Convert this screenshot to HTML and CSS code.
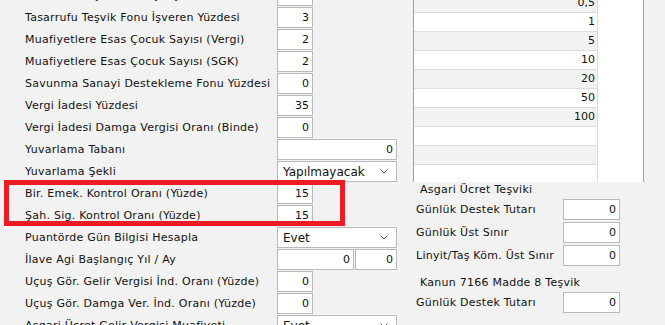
FILE: index.html
```html
<!DOCTYPE html>
<html lang="tr">
<head>
<meta charset="utf-8">
<link rel="stylesheet" href="styles.css">
</head>
<body>
<div class="page">
  <div class="left">
    <div class="row"><span class="lbl">Tasarrufu Teşvik Fonu Çalışan Yüzdesi</span><span class="inp">3</span></div>
    <div class="row"><span class="lbl">Tasarrufu Teşvik Fonu İşveren Yüzdesi</span><span class="inp">3</span></div>
    <div class="row"><span class="lbl">Muafiyetlere Esas Çocuk Sayısı (Vergi)</span><span class="inp">2</span></div>
    <div class="row"><span class="lbl">Muafiyetlere Esas Çocuk Sayısı (SGK)</span><span class="inp">2</span></div>
    <div class="row"><span class="lbl">Savunma Sanayi Destekleme Fonu Yüzdesi</span><span class="inp">0</span></div>
    <div class="row"><span class="lbl">Vergi İadesi Yüzdesi</span><span class="inp">35</span></div>
    <div class="row"><span class="lbl">Vergi İadesi Damga Vergisi Oranı (Binde)</span><span class="inp">0</span></div>
    <div class="row"><span class="lbl">Yuvarlama Tabanı</span><span class="inp wide">0</span></div>
    <div class="row"><span class="lbl">Yuvarlama Şekli</span><span class="sel"><span>Yapılmayacak</span><svg class="chev" width="8" height="5" viewBox="0 0 8 5"><polyline points="0.5,0.5 4,4 7.5,0.5" fill="none" stroke="#555" stroke-width="1"/></svg></span></div>
    <div class="row"><span class="lbl">Bir. Emek. Kontrol Oranı (Yüzde)</span><span class="inp">15</span></div>
    <div class="row"><span class="lbl">Şah. Sig. Kontrol Oranı (Yüzde)</span><span class="inp">15</span></div>
    <div class="row"><span class="lbl">Puantörde Gün Bilgisi Hesapla</span><span class="sel"><span>Evet</span><svg class="chev" width="8" height="5" viewBox="0 0 8 5"><polyline points="0.5,0.5 4,4 7.5,0.5" fill="none" stroke="#555" stroke-width="1"/></svg></span></div>
    <div class="row"><span class="lbl">İlave Agi Başlangıç Yıl / Ay</span><span class="pair"><span class="inp yil">0</span><span class="inp ay">0</span></span></div>
    <div class="row"><span class="lbl">Uçuş Gör. Gelir Vergisi İnd. Oranı (Yüzde)</span><span class="inp">0</span></div>
    <div class="row"><span class="lbl">Uçuş Gör. Damga Ver. İnd. Oranı (Yüzde)</span><span class="inp">0</span></div>
    <div class="row"><span class="lbl">Asgari Ücret Gelir Vergisi Muafiyeti</span><span class="sel"><span>Evet</span><svg class="chev" width="8" height="5" viewBox="0 0 8 5"><polyline points="0.5,0.5 4,4 7.5,0.5" fill="none" stroke="#555" stroke-width="1"/></svg></span></div>
  </div>
  <div class="right">
    <div class="grid">
      <div class="grid-rows">
        <div class="grow odd"><span class="cell">0,5</span></div>
        <div class="grow"><span class="cell">1</span></div>
        <div class="grow odd"><span class="cell">5</span></div>
        <div class="grow"><span class="cell">10</span></div>
        <div class="grow odd"><span class="cell">20</span></div>
        <div class="grow"><span class="cell">50</span></div>
        <div class="grow odd"><span class="cell">100</span></div>
        <div class="grow"><span class="cell"></span></div>
        <div class="grow odd"><span class="cell"></span></div>
        <div class="grow"><span class="cell"></span></div>
      </div>
    </div>
    <div class="section">
      <div class="title">Asgari Ücret Teşviki</div>
      <div class="srow"><span class="slbl">Günlük Destek Tutarı</span><span class="inp sinp">0</span></div>
      <div class="srow"><span class="slbl">Günlük Üst Sınır</span><span class="inp sinp">0</span></div>
      <div class="srow"><span class="slbl">Linyit/Taş Köm. Üst Sınır</span><span class="inp sinp">0</span></div>
      <div class="title t2">Kanun 7166 Madde 8 Teşvik</div>
      <div class="srow"><span class="slbl">Günlük Destek Tutarı</span><span class="inp sinp">0</span></div>
    </div>
  </div>
</div>
<div class="mark"></div>
</body>
</html>
```
FILE: styles.css
```css
html, body {
  margin: 0;
  padding: 0;
}
body {
  width: 665px;
  height: 325px;
  overflow: hidden;
  background: #f2f2f2;
  font-family: "DejaVu Sans", Verdana, sans-serif;
  font-size: 11px;
  letter-spacing: 0.25px;
  color: #111;
  position: relative;
}
.page {
  display: flex;
  align-items: flex-start;
}
.left {
  width: 400px;
  margin-top: -15px;
}
.row {
  display: flex;
  align-items: center;
  height: 21px;
  margin-bottom: 1px;
}
.lbl {
  width: 252px;
  padding-left: 25px;
  white-space: nowrap;
  overflow: hidden;
}
.inp {
  box-sizing: border-box;
  width: 36px;
  height: 21px;
  border: 1px solid #b9b9b9;
  background: #fff;
  text-align: right;
  padding-right: 3px;
  line-height: 19px;
  white-space: nowrap;
  letter-spacing: 0;
}
.inp.wide { width: 120px; }
.pair {
  display: flex;
  gap: 1px;
}
.inp.yil { width: 77px; }
.inp.ay { width: 42px; }
.sel {
  box-sizing: border-box;
  width: 120px;
  height: 21px;
  border: 1px solid #b9b9b9;
  background: #fff;
  display: flex;
  align-items: center;
  justify-content: space-between;
  padding-left: 5px;
  padding-right: 8px;
  font-size: 12px;
  letter-spacing: 0;
}
.chev { display: block; }
.right {
  margin-left: 13px;
  width: 231px;
}
.grid {
  box-sizing: border-box;
  width: 231px;
  height: 182px;
  overflow: hidden;
  background: #fff;
  border-left: 1px solid #a0a0a0;
  border-right: 1px solid #a0a0a0;
}
.grid-rows { margin-top: -6px; }
.grow {
  display: flex;
}
.cell {
  box-sizing: border-box;
  width: 184px;
  height: 19px;
  border-bottom: 1px solid #dcdcdc;
  border-right: 1px solid #dcdcdc;
  text-align: right;
  padding-right: 2px;
  line-height: 18px;
  background: #fff;
  letter-spacing: 0;
}
.grow.odd .cell { background: #f2f2f2; }
.section {
  padding-left: 3px;
}
.title {
  height: 15px;
  line-height: 15px;
  padding-left: 4px;
  margin-bottom: 2px;
}
.title.t2 { margin-top: 9px; }
.srow {
  display: flex;
  align-items: center;
  height: 21px;
  margin-bottom: 2px;
}
.slbl {
  width: 147px;
  white-space: nowrap;
}
.inp.sinp { width: 57px; }
.mark {
  position: absolute;
  left: 4px;
  top: 180px;
  width: 341px;
  height: 46px;
  box-sizing: border-box;
  border: 5px solid #ed1c24;
}
```
